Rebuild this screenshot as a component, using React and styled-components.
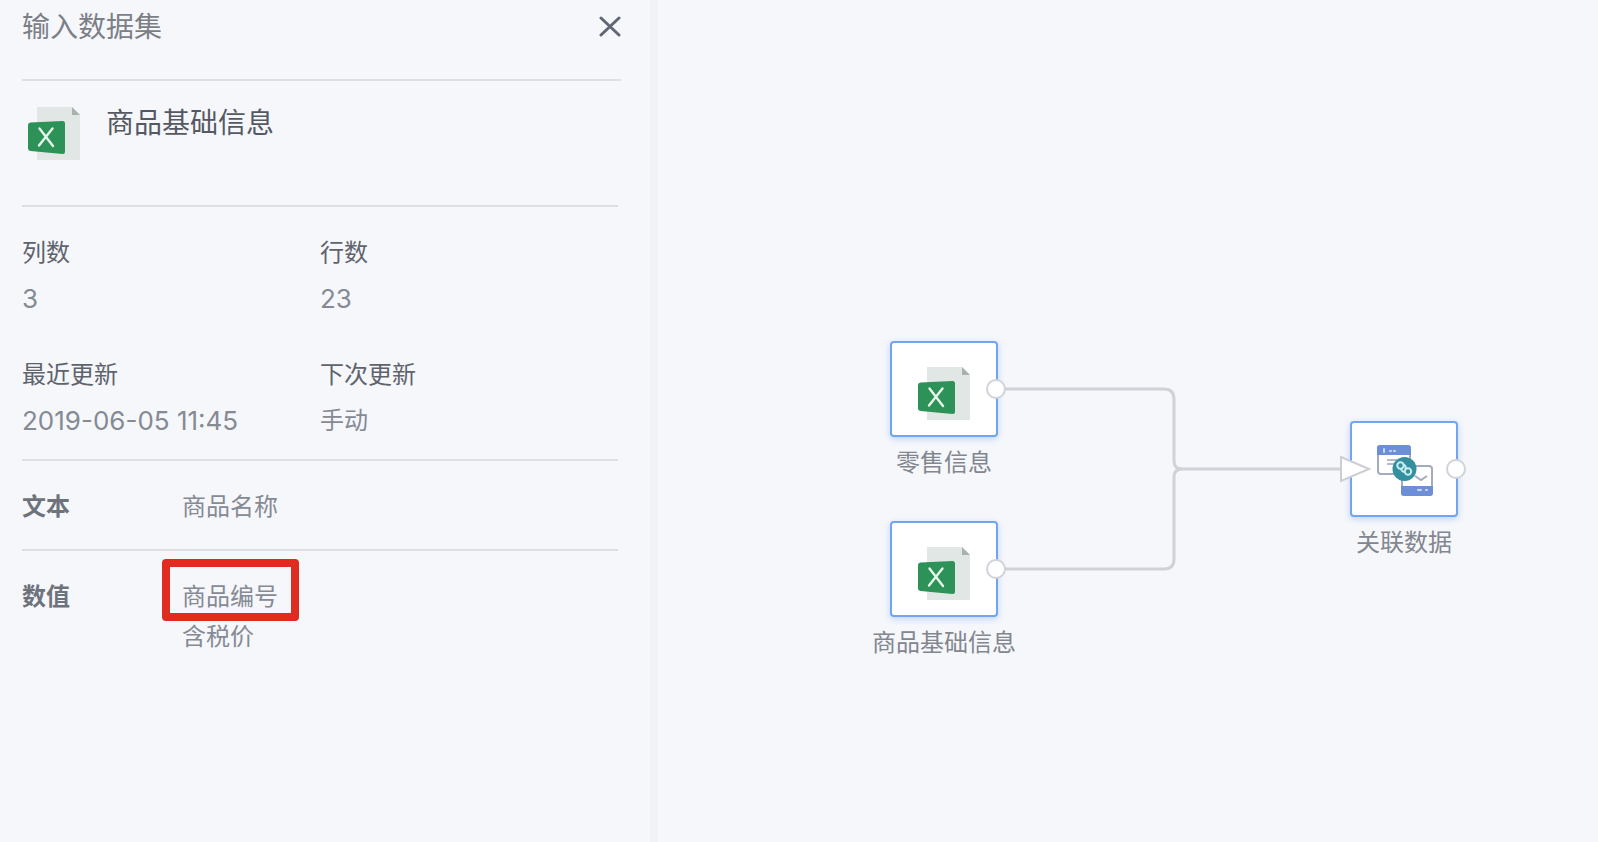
import React from "react";
import styled, { createGlobalStyle } from "styled-components";

const GlobalStyle = createGlobalStyle`
  *, *::before, *::after { box-sizing: border-box; }
  body {
    margin: 0;
    background: #f5f7fb;
    color: #7d828c;
    font-family: "Liberation Sans", "Noto Sans CJK SC", sans-serif;
    font-size: 24px;
    line-height: 32px;
  }
  h1, h2, dl, dd, ul, p { margin: 0; padding: 0; font-weight: 400; }
  ul { list-style: none; }
`;

const Page = styled.div`
  display: flex;
  min-height: 100vh;
`;

const Panel = styled.aside`
  flex: none;
  width: 658px;
  padding: 0 29px 24px 22px;
  border-right: 8px solid #f0f2f6;
`;

const PanelHeader = styled.header`
  display: flex;
  justify-content: space-between;
  align-items: flex-start;
  padding: 8px 0 31px;
  border-bottom: 2px solid #dddfe4;
`;

const Title = styled.h1`
  font-size: 28px;
  line-height: 40px;
  color: #7c7f86;
`;

const CloseButton = styled.button`
  display: flex;
  padding: 7px 0;
  border: 0;
  background: none;
  color: #626775;
  cursor: pointer;
`;

const PanelBody = styled.div`
  padding-right: 3px;
`;

const Section = styled.section`
  border-bottom: ${(p) => (p.$last ? "0" : "2px solid #dddfe4")};
`;

const DatasetHeading = styled.div`
  display: flex;
  align-items: flex-start;
  gap: 24px;
  height: 124px;
  padding: 23px 0 0 6px;

  svg { margin-top: 3px; }
`;

const DatasetName = styled.h2`
  font-size: 28px;
  line-height: 40px;
  color: #555963;
`;

const Stats = styled.dl`
  display: grid;
  grid-template-columns: 1fr 1fr;
  row-gap: 44px;
  padding: 30px 0 22px;
`;

const StatLabel = styled.dt`
  margin-bottom: 14px;
  color: #5f636c;
`;

const StatValue = styled.dd`
  color: #858a93;

  ${(p) => p.$numeric && `
    font-family: Inter, "Noto Sans CJK SC", sans-serif;
    font-size: 26px;
  `}
`;

const FieldGroup = styled.div`
  display: flex;
  padding: 30px 0 26px;
`;

const FieldType = styled.h2`
  flex: none;
  width: 160px;
  font-size: 24px;
  font-weight: 700;
  color: #6d727b;
`;

const FieldList = styled.ul`
  display: grid;
  justify-items: start;
  gap: 8px;
`;

const Field = styled.li`
  position: relative;
  color: #868a94;

  ${(p) => p.$marked && `
    &::after {
      content: "";
      position: absolute;
      inset: -22px -21px -8px -20px;
      border: 8px solid #df2b20;
      border-radius: 4px;
    }
  `}
`;

const Canvas = styled.main`
  position: relative;
  flex: 1;
  min-width: 0;
`;

const Wires = styled.svg`
  position: absolute;
  inset: 0;
  width: 100%;
  height: 100%;
`;

const Node = styled.figure`
  position: absolute;
  left: ${(p) => p.$x}px;
  top: ${(p) => p.$y}px;
  display: flex;
  flex-direction: column;
  align-items: center;
  gap: 10px;
  width: 160px;
  margin: 0;
`;

const NodeBox = styled.div`
  position: relative;
  display: flex;
  align-items: center;
  justify-content: center;
  width: 108px;
  height: 96px;
  padding: 10px 0 0 2px;
  border: 2px solid #72a5ef;
  border-radius: 4px;
  background: #fff;
  box-shadow: 0 2px 6px rgba(90, 145, 240, 0.35);
`;

const NodeLabel = styled.figcaption`
  white-space: nowrap;
  color: #82868e;
`;

const OutPort = styled.span`
  position: absolute;
  top: 36px;
  right: -10px;
  width: 20px;
  height: 20px;
  border: 2px solid #d0d3da;
  border-radius: 50%;
  background: #fff;
`;

const InPort = styled.svg`
  position: absolute;
  top: 32px;
  left: -13px;
`;

function ExcelIcon() {
  return (
    <svg width="54" height="54" viewBox="0 0 54 54" aria-hidden="true">
      <path d="M9 0H44L52 8V53H9Z" fill="#e0e7e4" />
      <path d="M44 0L52 8H44Z" fill="#a9b0b1" />
      <path d="M2.500 15.500L34.500 14Q37 14 37 16.500V44.500Q37 47 34.500 47L2.500 44Q0 43.500 0 41.500V18Q0 15.700 2.500 15.500Z" fill="#2c9257" />
      <path d="M11.500 21.500L25 39M24.500 21.500L11 38.500" fill="none" stroke="#e6f7e9" strokeWidth="2.400" strokeLinecap="round" />
    </svg>
  );
}

function LinkedTablesIcon() {
  return (
    <svg width="58" height="60" viewBox="-2 0 58 60" aria-hidden="true">
      <rect x="0" y="2" width="32" height="28" rx="3" fill="#fff" stroke="#a3abc0" strokeWidth="2" />
      <path d="M-1 11V4Q-1 1 2 1H30Q33 1 33 4V11Z" fill="#6c8fd8" />
      <path d="M6 5V8M12 7H13M16 7H17" stroke="#c8d8f5" strokeWidth="2" strokeLinecap="round" />
      <path d="M9 16H19M9 20H17" stroke="#b4bbd0" strokeWidth="2" />
      <rect x="24" y="22" width="30" height="29" rx="3" fill="#fff" stroke="#a3abc0" strokeWidth="2" />
      <path d="M23 42H55V49Q55 52 52 52H26Q23 52 23 49Z" fill="#6c8fd8" />
      <path d="M40 46H43M48 46H49" stroke="#c8d8f5" strokeWidth="2" strokeLinecap="round" />
      <path d="M37 32L43 36L49 32" fill="none" stroke="#a3abc0" strokeWidth="2" />
      <circle cx="26.500" cy="25" r="12" fill="#348f9e" />
      <g fill="none" stroke="#c9eef2" strokeWidth="2">
        <circle cx="22.500" cy="21.500" r="3.200" />
        <circle cx="30" cy="27.500" r="3.200" />
        <path d="M25 20.500Q28.500 21 27.500 25.500M23 25Q24 28 27 28" />
      </g>
    </svg>
  );
}

const stats = [
  { label: "列数", value: "3", numeric: true },
  { label: "行数", value: "23", numeric: true },
  { label: "最近更新", value: "2019-06-05 11:45", numeric: true },
  { label: "下次更新", value: "手动" },
];

const fieldGroups = [
  { type: "文本", fields: [{ name: "商品名称" }] },
  { type: "数值", fields: [{ name: "商品编号", marked: true }, { name: "含税价" }] },
];

const nodes = [
  { label: "零售信息", x: 206, y: 341, Icon: ExcelIcon },
  { label: "商品基础信息", x: 206, y: 521, Icon: ExcelIcon },
  { label: "关联数据", x: 666, y: 421, Icon: LinkedTablesIcon, hasInput: true },
];

export default function App() {
  return (
    <Page>
      <GlobalStyle />
      <Panel>
        <PanelHeader>
          <Title>输入数据集</Title>
          <CloseButton type="button" aria-label="关闭">
            <svg width="24" height="24" viewBox="0 0 24 24" fill="none" stroke="currentColor" strokeWidth="3" strokeLinecap="round">
              <path d="M4 3L22 20M22 3L4 20" />
            </svg>
          </CloseButton>
        </PanelHeader>
        <PanelBody>
          <Section>
            <DatasetHeading>
              <ExcelIcon />
              <DatasetName>商品基础信息</DatasetName>
            </DatasetHeading>
          </Section>
          <Section>
            <Stats>
              {stats.map((s) => (
                <div key={s.label}>
                  <StatLabel>{s.label}</StatLabel>
                  <StatValue $numeric={s.numeric}>{s.value}</StatValue>
                </div>
              ))}
            </Stats>
          </Section>
          {fieldGroups.map((g, i) => (
            <Section key={g.type} $last={i === fieldGroups.length - 1}>
              <FieldGroup>
                <FieldType>{g.type}</FieldType>
                <FieldList>
                  {g.fields.map((f) => (
                    <Field key={f.name} $marked={f.marked}>{f.name}</Field>
                  ))}
                </FieldList>
              </FieldGroup>
            </Section>
          ))}
        </PanelBody>
      </Panel>
      <Canvas>
        <Wires fill="none" stroke="#d0d2d7" strokeWidth="3" aria-hidden="true">
          <path d="M340 389H506Q516 389 516 399V461Q516 469 524 469H690" />
          <path d="M340 569H506Q516 569 516 559V477Q516 469 524 469" />
        </Wires>
        {nodes.map(({ label, x, y, Icon, hasInput }) => (
          <Node key={label} $x={x} $y={y}>
            <NodeBox>
              <Icon />
              {hasInput && (
                <InPort width="34" height="28" viewBox="0 0 34 28" aria-hidden="true">
                  <path d="M2 2L30 14L2 26Z" fill="#fff" stroke="#ccced4" strokeWidth="2" />
                </InPort>
              )}
              <OutPort />
            </NodeBox>
            <NodeLabel>{label}</NodeLabel>
          </Node>
        ))}
      </Canvas>
    </Page>
  );
}
